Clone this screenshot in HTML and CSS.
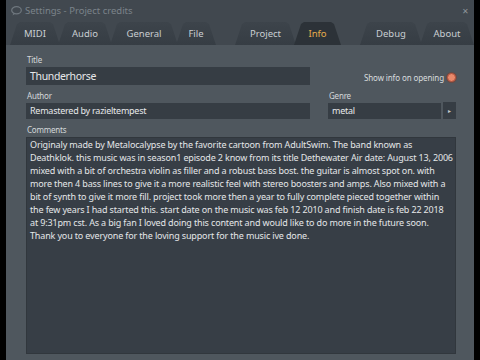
FILE: index.html
```html
<!DOCTYPE html>
<html lang="en">
<head>
    <meta charset="UTF-8">
    <title>Settings - Project credits</title>
    <link rel="stylesheet" href="styles.css">
</head>
<body>

    <div class="window">
        <div class="titlebar">
            <svg class="app-icon" width="11" height="10" viewBox="0 0 11 10">
                <ellipse cx="5.5" cy="4.2" rx="4.8" ry="3.6" fill="none" stroke="#6f777e" stroke-width="1.2"/>
                <path d="M2.5 7 L1.5 9.5 L4.5 7.6" fill="#6f777e"/>
            </svg>
            <span class="win-title">Settings - Project credits</span>
            <span class="close">&#x2715;</span>
        </div>

        <div class="tabs">
            <div class="tab tab-midi">MIDI</div>
            <div class="tab tab-audio">Audio</div>
            <div class="tab tab-general">General</div>
            <div class="tab tab-file">File</div>
            <div class="tab tab-project">Project</div>
            <div class="tab tab-info active">Info</div>
            <div class="tab tab-debug">Debug</div>
            <div class="tab tab-about">About</div>
        </div>

        <div class="panel">
            <div class="form">
                <div class="field">
                    <div class="label">Title</div>
                    <div class="input input-title">Thunderhorse</div>
                </div>
                <div class="show-info">
                    <span>Show info on opening</span>
                    <span class="led"></span>
                </div>

                <div class="field">
                    <div class="label">Author</div>
                    <div class="input">Remastered by razieltempest</div>
                </div>
                <div class="field">
                    <div class="label">Genre</div>
                    <div class="genre">
                        <div class="input genre-input">metal</div>
                        <div class="genre-btn">&#x25B8;</div>
                    </div>
                </div>

                <div class="field comments">
                    <div class="label">Comments</div>
                    <div class="textarea">Originaly made by Metalocalypse by the favorite cartoon from AdultSwim. The band known as<br>Deathklok. this music was in season1 episode 2 know from its title Dethewater Air date: August 13, 2006<br>mixed with a bit of orchestra violin as filler and a robust bass bost. the guitar is almost spot on. with<br>more then 4 bass lines to give it a more realistic feel with stereo boosters and amps. Also mixed with a<br>bit of synth to give it more fill. project took more then a year to fully complete pieced together within<br>the few years I had started this. start date on the music was feb 12 2010 and finish date is feb 22 2018<br>at 9:31pm cst. As a big fan I loved doing this content and would like to do more in the future soon.<br>Thank you to everyone for the loving support for the music ive done.</div>
                </div>
            </div>
        </div>
    </div>

</body>
</html>
```

FILE: styles.css
```css
html, body {
    margin: 0;
    padding: 0;
    background: #000;
}
body {
    font-family: "Noto Sans", "Open Sans", sans-serif;
    width: 480px;
    height: 360px;
    overflow: hidden;
}
.window {
    margin: 0 6px;
    width: 468px;
    height: 360px;
    background: #41484f;
    display: flex;
    flex-direction: column;
}
.titlebar {
    height: 20px;
    display: flex;
    align-items: center;
    padding-left: 5px;
    color: #7b838a;
    font-size: 9.5px;
}
.app-icon {
    margin-right: 3px;
    margin-top: 1px;
}
.win-title {
    flex: 1;
}
.close {
    font-size: 8px;
    margin-right: 5px;
    color: #8d949a;
}

/* tabs */
.tabs {
    height: 25px;
    display: flex;
    align-items: flex-end;
    padding-left: 4px;
}
.tab {
    height: 23px;
    line-height: 23px;
    text-align: center;
    font-size: 9.5px;
    color: #c9ced2;
    background: linear-gradient(#3d444b, #363d44);
    clip-path: polygon(0 100%, 7px 2px, 10px 0, calc(100% - 10px) 0, calc(100% - 7px) 2px, 100% 100%);
    margin-right: -2px;
}
.tab.active {
    background: #2c3238;
    color: #e4ad4c;
}
.tab-midi { width: 50px; }
.tab-audio { width: 54px; }
.tab-general { width: 68px; }
.tab-file { width: 40px; }
.tab-project { width: 61px; margin-left: 21px; }
.tab-info { width: 47px; }
.tab-debug { width: 62px; margin-left: 21px; }
.tab-about { width: 54px; }

/* panel */
.panel {
    flex: 1;
    background: #4f575e;
    padding: 10px 18px 6px 20px;
}
.form {
    display: grid;
    grid-template-columns: 284px 128px;
    column-gap: 18px;
    row-gap: 6px;
    height: 100%;
    grid-template-rows: auto auto 1fr;
}
.field {
    display: flex;
    flex-direction: column;
}
.label {
    font-size: 8px;
    letter-spacing: -0.2px;
    line-height: 10px;
    color: #d3d7da;
    margin: 0 0 2px 1px;
}
.input {
    height: 16px;
    line-height: 16px;
    background: #363d44;
    color: #e6e8ea;
    font-size: 9px;
    letter-spacing: -0.25px;
    padding-left: 4px;
    white-space: nowrap;
    overflow: hidden;
}
.input-title {
    height: 18px;
    line-height: 18px;
    font-size: 10.5px;
    letter-spacing: -0.35px;
}
.show-info {
    display: flex;
    align-items: center;
    justify-content: flex-end;
    gap: 3px;
    font-size: 8px;
    letter-spacing: -0.1px;
    color: #d8dcdf;
    padding-top: 14px;
}
.led {
    width: 7px;
    height: 7px;
    border-radius: 50%;
    background: #e9896b;
    border: 1px solid #b5523c;
    box-shadow: 0 0 0 1px #6a4a45;
}
.genre {
    display: flex;
    gap: 2px;
}
.genre-input {
    flex: 1;
}
.genre-btn {
    width: 13px;
    height: 17px;
    margin-top: -1px;
    background: #363d44;
    color: #c6cbcf;
    font-size: 6px;
    line-height: 18px;
    text-align: center;
}
.comments {
    grid-column: 1 / 3;
    min-height: 0;
}
.textarea {
    flex: 1;
    background: #373e46;
    border: 1px solid #31373d;
    color: #e4e6e8;
    font-size: 9px;
    letter-spacing: -0.15px;
    line-height: 13px;
    padding: 0 3px;
    white-space: nowrap;
    overflow: hidden;
}
```
